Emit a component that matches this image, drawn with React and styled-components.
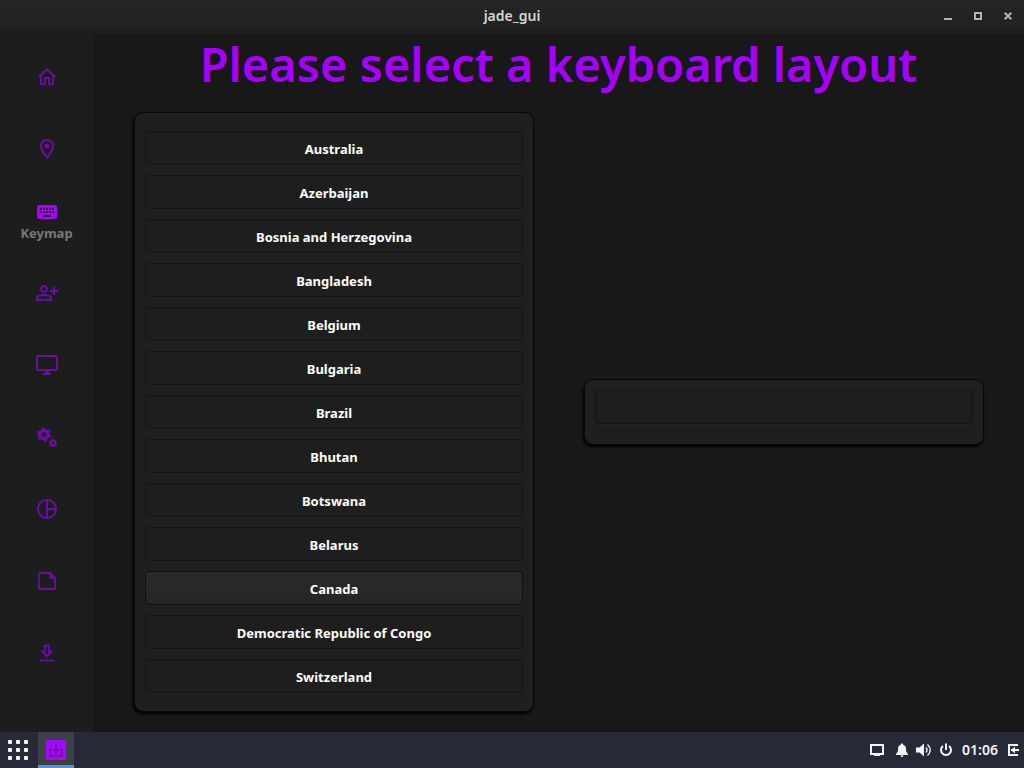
import React from "react";
import styled, { createGlobalStyle } from "styled-components";
import {
  MdKeyboard,
  MdOutlineDesktopWindows,
  MdOutlineLocationOn,
  MdOutlinePersonAddAlt,
  MdOutlinePieChart
} from "react-icons/md";

const GlobalStyle = createGlobalStyle`
  * {
    box-sizing: border-box;
  }

  body {
    margin: 0;
    background: #181818;
    font-family: "Noto Sans", "Open Sans", sans-serif;
  }

  button {
    font-family: inherit;
    border: 0;
    background: none;
    padding: 0;
    cursor: pointer;
  }
`;

const Desktop = styled.div`
  min-height: 100vh;
  display: flex;
  flex-direction: column;
`;

const TitleBar = styled.header`
  display: grid;
  grid-template-columns: 1fr auto 1fr;
  align-items: start;
  height: 34px;
  background: linear-gradient(#242424, #222222 80%, #1c1c1c);
  color: #d6d6d6;
`;

const WindowTitle = styled.span`
  grid-column: 2;
  font-size: 14px;
  line-height: 32px;
  font-weight: 600;
`;

const WindowControls = styled.div`
  display: flex;
  justify-content: flex-end;
  padding-right: 1px;
`;

const WindowButton = styled.button`
  display: flex;
  align-items: center;
  justify-content: center;
  width: 30px;
  height: 32px;
  color: #b4b4b4;
`;

const Window = styled.div`
  flex: 1;
  display: flex;
`;

const Sidebar = styled.nav`
  display: flex;
  flex-direction: column;
  flex: 0 0 93px;
  padding: 7px 0;
  background: #1d1d1d;
`;

const NavItem = styled.button`
  display: flex;
  flex-direction: column;
  align-items: center;
  justify-content: center;
  height: 72px;
  color: ${props => (props.$active ? "#a500ff" : "#6c0ca6")};

  svg {
    width: 24px;
    height: 24px;
  }
`;

const NavLabel = styled.span`
  color: #787878;
  font-size: 13px;
  line-height: 18px;
  font-weight: 700;
`;

const Main = styled.main`
  flex: 1;
  display: flex;
  flex-direction: column;
  background: #181818;
`;

const Heading = styled.h1`
  margin: 0;
  color: #a500ff;
  font-size: 47px;
  line-height: 60px;
  font-weight: 600;
  text-align: center;
`;

const Columns = styled.div`
  flex: 1;
  display: grid;
  grid-template-columns: 1fr 1fr;
  align-items: center;
  gap: 52px;
  padding: 0 41px 2px 42px;
`;

const Card = styled.section`
  display: flex;
  flex-direction: column;
  gap: 10px;
  padding: ${props => (props.$scrolling ? "18px 10px" : "10px 10px 20px")};
  border-radius: 8px;
  background: #1f1f1f;
  box-shadow: 0 0 0 1px #080808, -1px 2px 3px 1px #000000;
`;

const LayoutButton = styled.button`
  height: 34px;
  border: 1px solid;
  border-color: ${props => (props.$hovered ? "#101010" : "#141414")};
  border-radius: 4px;
  background: ${props =>
    props.$hovered ? "linear-gradient(#292929, #262626)" : "#1e1e1e"};
  box-shadow: 0 1px 0 #222222;
  color: #ffffff;
  padding-top: 2px;
  font-size: 13px;
  line-height: 20px;
  font-weight: 700;
`;

const Taskbar = styled.footer`
  display: flex;
  align-items: stretch;
  justify-content: space-between;
  height: 36px;
  background: #262a36;
`;

const TaskGroup = styled.div`
  display: flex;
`;

const LauncherButton = styled.button`
  display: flex;
  align-items: center;
  justify-content: center;
  width: 38px;
  padding-right: 2px;
  color: #ffffff;
`;

const TaskButton = styled.button`
  display: flex;
  align-items: center;
  justify-content: center;
  width: 36px;
  padding-top: 3px;
  background: #3c404b;
  border-bottom: 3px solid #5294cf;
`;

const Tray = styled.div`
  display: flex;
  align-items: center;
  gap: 6px;
  padding-right: 4px;
  color: #f5f5f7;
`;

const TrayButton = styled.button`
  display: flex;
  color: inherit;
`;

const Clock = styled.time`
  margin: 0 2px;
  font-size: 14px;
  line-height: 20px;
  font-weight: 600;
`;

const HomeIcon = () => (
  <svg viewBox="0 0 24 24" fill="none" stroke="currentColor" strokeWidth="1.8">
    <path d="M3.5 12 12 4.5l8.500 7.500M6 11v8h3.800v-6h4.400v6h3.800V11" />
  </svg>
);

const GearsIcon = () => (
  <svg viewBox="0 0 24 24" fill="none" stroke="currentColor">
    <circle cx="9" cy="9.5" r="4" strokeWidth="3.4" />
    <circle cx="9" cy="9.5" r="6" strokeWidth="2.2" strokeDasharray="3.1 3.18" />
    <circle cx="18" cy="18" r="2.3" strokeWidth="2.2" />
    <circle cx="18" cy="18" r="3.5" strokeWidth="1.2" strokeDasharray="1.8 1.86" />
  </svg>
);

const NoteIcon = () => (
  <svg viewBox="0 0 24 24" fill="none" stroke="currentColor" strokeWidth="1.8">
    <path d="M5 4h10.200l5 5v10q0 1-1 1H5q-1 0-1-1V5q0-1 1-1z" />
    <path d="M14.500 4v5.800h6z" fill="currentColor" stroke="none" />
  </svg>
);

const DownloadIcon = () => (
  <svg viewBox="0 0 24 24" fill="none" stroke="currentColor" strokeWidth="1.8">
    <path d="M10 4.500h4v6h2.700L12 15.200 7.300 10.500H10z" />
    <path d="M5 19.500h14" />
  </svg>
);

const GridIcon = () => (
  <svg width="20" height="20" viewBox="0 0 20 20" fill="currentColor">
    {[2, 10, 18].map(y =>
      [2, 10, 18].map(x => (
        <rect key={`${x}-${y}`} x={x - 2} y={y - 2} width="4" height="4" rx="1" />
      ))
    )}
  </svg>
);

const InstallerIcon = () => (
  <svg width="20" height="20" viewBox="0 0 20 20" fill="none">
    <rect width="20" height="20" rx="2" fill="#a209fa" />
    <path
      d="M6 9.500H4V16h12V9.500h-2M10 4v8M7 9.500l3 3 3-3"
      stroke="#6d13a3"
      strokeWidth="1.6"
    />
  </svg>
);

const MinimizeIcon = () => (
  <svg width="8" height="8" viewBox="0 0 8 8" fill="currentColor">
    <path d="M0 6h8v2H0z" />
  </svg>
);

const MaximizeIcon = () => (
  <svg width="8" height="8" viewBox="0 0 8 8" fill="none" stroke="currentColor">
    <rect x="1" y="1" width="6" height="6" strokeWidth="2" />
  </svg>
);

const CloseIcon = () => (
  <svg width="8" height="8" viewBox="0 0 8 8" stroke="currentColor" strokeWidth="2">
    <path d="M.7.7l6.600 6.600M7.300.7L.7 7.300" />
  </svg>
);

const ScreenIcon = () => (
  <svg width="20" height="16" viewBox="0 0 20 16" fill="none" stroke="currentColor">
    <path d="M3 3h12v9H3z" strokeWidth="2" />
    <path d="M6 13.500h6" strokeWidth="1" />
  </svg>
);

const BellIcon = () => (
  <svg width="16" height="16" viewBox="0 0 16 16" fill="currentColor">
    <path d="M8 1.500c.8 0 1.200.5 1.200 1.200C11.300 3.300 12 5 12 7c0 2.700.6 3.700 2 5v1H2v-1c1.400-1.300 2-2.300 2-5 0-2 .7-3.700 2.800-4.300 0-.7.4-1.200 1.200-1.200zM6.500 13.500h3c0 .8-.7 1.500-1.500 1.500s-1.500-.7-1.500-1.500z" />
  </svg>
);

const VolumeIcon = () => (
  <svg width="16" height="16" viewBox="0 0 16 16" fill="currentColor">
    <path d="M0 5.500h3.500L8 1.500v13l-4.500-4H0z" />
    <path
      d="M10 5.500q2 2.500 0 5M11.500 2.500q5.500 5.500 0 11"
      fill="none"
      stroke="currentColor"
      strokeWidth="1.4"
    />
  </svg>
);

const PowerIcon = () => (
  <svg width="16" height="16" viewBox="0 0 16 16" fill="none" stroke="currentColor">
    <path d="M5 4a5 5 0 1 0 6 0M8 1.500V8" strokeWidth="2" />
  </svg>
);

const LeaveIcon = () => (
  <svg width="14" height="14" viewBox="0 0 14 14" fill="none" stroke="currentColor">
    <path d="M12 2H3v10h9M5 7h8" strokeWidth="2" />
    <path d="M5 7l4-3.500v7z" fill="currentColor" stroke="none" />
  </svg>
);

const steps = [
  { name: "Welcome", icon: HomeIcon },
  { name: "Location", icon: MdOutlineLocationOn },
  { name: "Keymap", icon: MdKeyboard, active: true },
  { name: "Users", icon: MdOutlinePersonAddAlt },
  { name: "Desktop", icon: MdOutlineDesktopWindows },
  { name: "Misc", icon: GearsIcon },
  { name: "Partitioning", icon: MdOutlinePieChart },
  { name: "Summary", icon: NoteIcon },
  { name: "Install", icon: DownloadIcon }
];

const layouts = [
  "Australia",
  "Azerbaijan",
  "Bosnia and Herzegovina",
  "Bangladesh",
  "Belgium",
  "Bulgaria",
  "Brazil",
  "Bhutan",
  "Botswana",
  "Belarus",
  "Canada",
  "Democratic Republic of Congo",
  "Switzerland"
];

const windowControls = [
  { name: "Minimize", icon: MinimizeIcon },
  { name: "Maximize", icon: MaximizeIcon },
  { name: "Close", icon: CloseIcon }
];

const trayItems = [
  { name: "Displays", icon: ScreenIcon },
  { name: "Notifications", icon: BellIcon },
  { name: "Volume", icon: VolumeIcon },
  { name: "Power", icon: PowerIcon }
];

const App = () => {
  return (
    <>
      <GlobalStyle />
      <Desktop>
        <TitleBar>
          <WindowTitle>jade_gui</WindowTitle>
          <WindowControls>
            {windowControls.map(({ name, icon: Icon }) => (
              <WindowButton key={name} aria-label={name}>
                <Icon />
              </WindowButton>
            ))}
          </WindowControls>
        </TitleBar>

        <Window>
          <Sidebar>
            {steps.map(({ name, icon: Icon, active }) => (
              <NavItem key={name} $active={active} aria-label={name}>
                <Icon />
                {active && <NavLabel>{name}</NavLabel>}
              </NavItem>
            ))}
          </Sidebar>

          <Main>
            <Heading>Please select a keyboard layout</Heading>
            <Columns>
              <Card $scrolling>
                {layouts.map(layout => (
                  <LayoutButton key={layout} $hovered={layout === "Canada"}>
                    {layout}
                  </LayoutButton>
                ))}
              </Card>
              <Card>
                <LayoutButton aria-label="Layout variant" />
              </Card>
            </Columns>
          </Main>
        </Window>

        <Taskbar>
          <TaskGroup>
            <LauncherButton aria-label="Applications">
              <GridIcon />
            </LauncherButton>
            <TaskButton aria-label="jade_gui">
              <InstallerIcon />
            </TaskButton>
          </TaskGroup>
          <Tray>
            {trayItems.map(({ name, icon: Icon }) => (
              <TrayButton key={name} aria-label={name}>
                <Icon />
              </TrayButton>
            ))}
            <Clock>01:06</Clock>
            <TrayButton aria-label="Log out">
              <LeaveIcon />
            </TrayButton>
          </Tray>
        </Taskbar>
      </Desktop>
    </>
  );
};

export default App;
